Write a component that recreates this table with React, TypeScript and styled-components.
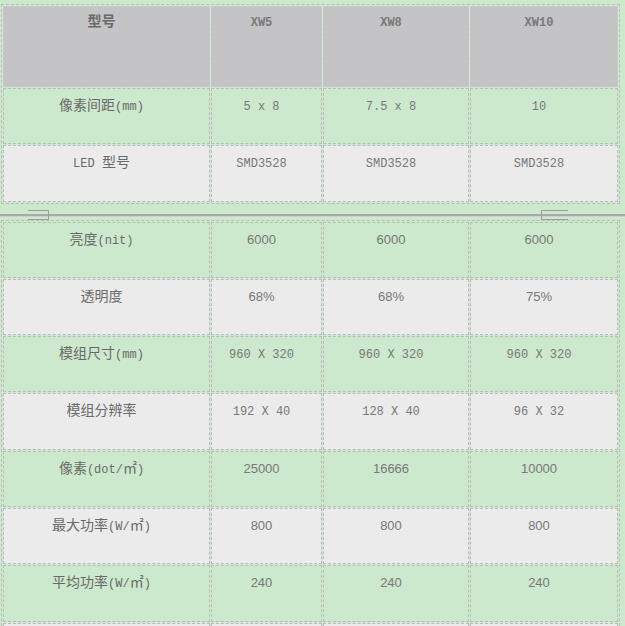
import React from "react";
import styled, { createGlobalStyle } from "styled-components";

const GlobalStyle = createGlobalStyle`
  html, body {
    margin: 0;
    padding: 0;
    background: #cce8cd;
  }
  body {
    font-family: "Noto Sans CJK SC", sans-serif;
  }
`;

type Tone = "head" | "green" | "gray";
type LatinKind = "mono" | "sans";

const TONE_BG: Record<Tone, string> = {
  head: "#c4c3c5",
  green: "#cce8cd",
  gray: "#ebebeb",
};

const Page = styled.div`
  width: 625px;
  padding-top: 4px;
  display: flex;
  flex-direction: column;
`;

const Table = styled.div`
  margin-left: 1px;
  display: grid;
  grid-template-columns: 207px 111px 146px 148px;
  gap: 1px;
  padding: 1px;
  width: fit-content;
  border: 1px dashed #bcbcbc;
`;

const Cell = styled.div<{ $tone: Tone; $first?: boolean }>`
  box-sizing: border-box;
  height: ${(p) => (p.$tone === "head" ? "81px" : "56.3px")};
  padding: ${(p) => (p.$tone === "head" ? "4px" : "6px")} 10px 0 0;
  background: ${(p) => TONE_BG[p.$tone]};
  border: 1px dashed ${(p) => (p.$tone === "head" ? "#c9c8ca" : "#bcbcbc")};
  text-align: center;
  line-height: 16px;
  white-space: pre;
  overflow: hidden;
  color: ${(p) => (p.$first ? "#6a6a6a" : "#787878")};
  font-weight: ${(p) => (p.$tone === "head" ? 700 : 400)};
`;

const Han = styled.span`
  font-family: "Noto Sans CJK SC", sans-serif;
  font-size: 14px;
`;

const Latin = styled.span<{ $kind: LatinKind }>`
  font-family: ${(p) =>
    p.$kind === "mono" ? `"Liberation Mono", monospace` : `"Liberation Sans", sans-serif`};
  font-size: ${(p) => (p.$kind === "mono" ? "12px" : "13px")};
`;

const Divider = styled.div`
  height: 16px;
  display: flex;
  justify-content: space-between;
  align-items: flex-end;
  padding: 0 57px 0 28px;
  background:
    linear-gradient(#a9a9a9, #a9a9a9) 0 10px / 100% 2px no-repeat,
    linear-gradient(#c4d6c5, #c4d6c5) 0 12px / 100% 1px no-repeat;
`;

const BreakMark = styled.span<{ $side: "left" | "right" }>`
  box-sizing: border-box;
  height: 10px;
  width: ${(p) => (p.$side === "left" ? "21px" : "27px")};
  border-top: 1px solid #9c9c9c;
  border-bottom: 1px solid #9c9c9c;
  border-left: ${(p) => (p.$side === "right" ? "1px solid #9c9c9c" : "none")};
  border-right: ${(p) => (p.$side === "left" ? "1px solid #9c9c9c" : "none")};
`;

const HAN_SPLIT = /([\u2E80-\u9FFF\uFF00-\uFFEF]+)/;
const HAN_TEST = /^[\u2E80-\u9FFF\uFF00-\uFFEF]+$/;

function Mixed({ text, kind }: { text: string; kind: LatinKind }) {
  return (
    <>
      {text
        .split(HAN_SPLIT)
        .filter((s) => s.length > 0)
        .map((part, i) =>
          HAN_TEST.test(part) ? (
            <Han key={i}>{part}</Han>
          ) : (
            <Latin key={i} $kind={kind}>
              {part}
            </Latin>
          )
        )}
    </>
  );
}

type Row = { tone: Tone; kind: LatinKind; cells: string[] };

const topRows: Row[] = [
  { tone: "head", kind: "mono", cells: ["型号", "XW5", "XW8", "XW10"] },
  { tone: "green", kind: "mono", cells: ["像素间距(mm)", "5 x 8", "7.5 x 8", "10"] },
  { tone: "gray", kind: "mono", cells: ["LED 型号", "SMD3528", "SMD3528", "SMD3528"] },
];

const bottomRows: Row[] = [
  { tone: "green", kind: "sans", cells: ["亮度(nit)", "6000", "6000", "6000"] },
  { tone: "gray", kind: "sans", cells: ["透明度", "68%", "68%", "75%"] },
  { tone: "green", kind: "mono", cells: ["模组尺寸(mm)", "960 X 320", "960 X 320", "960 X 320"] },
  { tone: "gray", kind: "mono", cells: ["模组分辨率", "192 X 40", "128 X 40", "96 X 32"] },
  { tone: "green", kind: "sans", cells: ["像素(dot/㎡)", "25000", "16666", "10000"] },
  { tone: "gray", kind: "sans", cells: ["最大功率(W/㎡)", "800", "800", "800"] },
  { tone: "green", kind: "sans", cells: ["平均功率(W/㎡)", "240", "240", "240"] },
  { tone: "gray", kind: "sans", cells: ["", "", "", ""] },
];

function SpecTable({ rows }: { rows: Row[] }) {
  return (
    <Table>
      {rows.map((row, r) =>
        row.cells.map((text, c) => (
          <Cell key={`${r}-${c}`} $tone={row.tone} $first={c === 0}>
            <Mixed text={text} kind={c === 0 ? "mono" : row.kind} />
          </Cell>
        ))
      )}
    </Table>
  );
}

export default function App() {
  return (
    <>
      <GlobalStyle />
      <Page>
        <SpecTable rows={topRows} />
        <Divider>
          <BreakMark $side="left" />
          <BreakMark $side="right" />
        </Divider>
        <SpecTable rows={bottomRows} />
      </Page>
    </>
  );
}
